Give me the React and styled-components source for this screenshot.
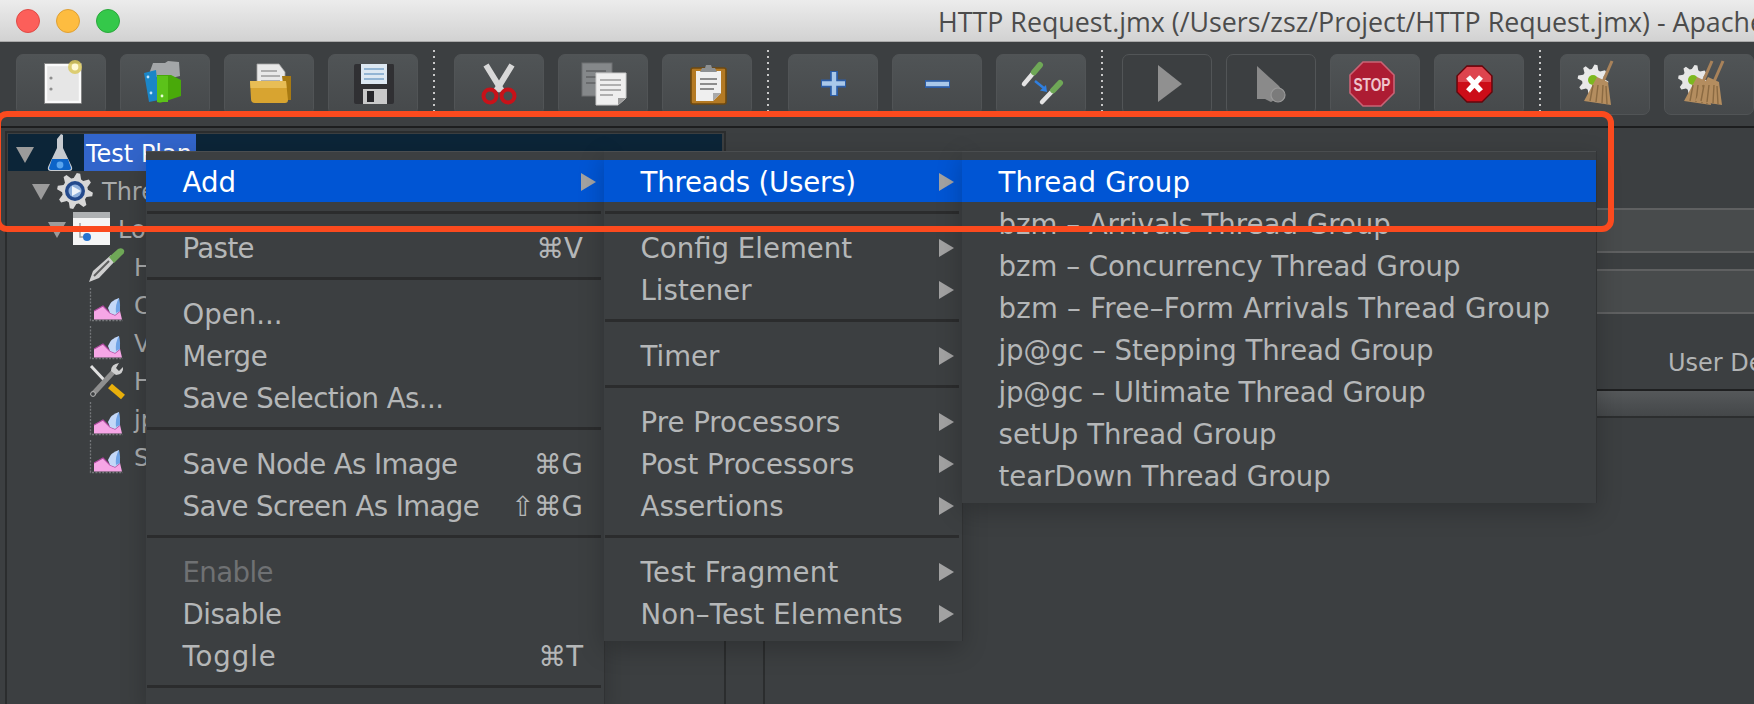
import React from "react";
import styled, { createGlobalStyle } from "styled-components";

const Global = createGlobalStyle`
  html, body { margin: 0; padding: 0; background: #3c3f41; }
  #root { width: 1754px; height: 704px; overflow: hidden; position: relative; }
`;

const FONT = `"DejaVu Sans", "Noto Sans", sans-serif`;

const Page = styled.div`
  width: 1754px; height: 704px; overflow: hidden; position: relative;
  display: flex; flex-direction: column; background: #3c3f41; font-family: ${FONT};
`;
const TitleBar = styled.header`
  flex: 0 0 42px; box-sizing: border-box; height: 42px; display: flex; align-items: center;
  padding-left: 28px; border-bottom: 1px solid #a9a9a9;
  background: linear-gradient(#ececec, #d2d2d2); overflow: hidden;
`;
const Lights = styled.div`display: flex; gap: 16px; width: 922px; margin-left: -12px; flex: none;`;
const Light = styled.span`
  width: 24px; height: 24px; border-radius: 50%; box-sizing: border-box;
  background: ${p => p.$c}; border: 1px solid ${p => p.$b};
`;
const Title = styled.div`
  font: 26.8px "Open Sans", "Noto Sans", sans-serif; color: #4c4c4c; white-space: nowrap; flex: none; padding-top: 1px;
`;
const Toolbar = styled.div`
  flex: 0 0 86px; box-sizing: border-box; height: 86px; display: flex; gap: 14px;
  padding: 12px 0 0 16px; border-bottom: 2px solid #1d1e1f; overflow: hidden;
`;
const ToolButton = styled.div`
  flex: none; box-sizing: border-box; width: 90px; height: 61px; border-radius: 7px; padding: 3px 0 0 14px;
  border: 1px solid ${p => p.$off ? "#525557" : "#515456"};
  background: ${p => p.$off ? "#3c3f41" : "linear-gradient(#505456, #46494b)"};
  svg { display: block; overflow: visible; }
`;
const ToolSep = styled.div`
  flex: none; width: 8px; height: 66px; margin-top: -4px;
  background-image: linear-gradient(#c8c8c8 34%, transparent 34%);
  background-size: 2px 6px; background-repeat: repeat-y; background-position: 1px 0;
`;
const Workspace = styled.main`flex: 1; display: flex; min-height: 0; padding-top: 3px;`;
const TreePane = styled.section`
  flex: none; box-sizing: border-box; width: 721px; margin-left: 5px; padding: 1px 2px 0 1px;
  border-left: 2px solid #2b2d2e; border-top: 2px solid #2b2d2e; border-right: 2px solid #2b2d2e;
`;
const TreeRow = styled.div`
  height: ${p => p.$h || 38}px; display: flex; align-items: center; box-sizing: border-box;
  padding-left: ${p => p.$level * 16 + 8}px; background: ${p => p.$selected ? "#0c2538" : "transparent"};
  font-size: 24px; color: #a9abac; white-space: nowrap;
`;
const Twist = styled.span`
  flex: none; width: 30px; display: flex; padding-top: 4px;
  &::before {
    content: ""; display: ${p => p.$leaf ? "none" : "block"}; width: 0; height: 0;
    border-left: 9px solid transparent; border-right: 9px solid transparent; border-top: 16px solid #9b9b9b;
  }
`;
const NodeIcon = styled.span`
  flex: none; width: 36px; height: 38px; margin: 0 9px 0 -5px; display: block;
  svg { display: block; overflow: visible; }
`;
const NodeLabel = styled.span`
  height: 37px; line-height: 41px; margin-left: -2px; padding: 0 4px 0 2px;
  background: ${p => p.$selected ? "#3265cb" : "transparent"};
  color: ${p => p.$selected ? "#fff" : "inherit"};
`;
const Splitter = styled.div`flex: none; width: 37px; margin-top: 30px; border-right: 2px solid #2b2d2e;`;
const Detail = styled.section`flex: 1; min-width: 0; padding-top: 77px; display: flex; flex-direction: column; overflow: hidden;`;
const Field = styled.div`
  flex: none; height: 41px; margin-bottom: 16px; border-top: 2px solid #5f6061; border-bottom: 2px solid #5f6061;
  background: #484b4c;
`;
const ColumnLabel = styled.div`
  flex: none; height: 52px; padding: 7px 0 0 903px; display: flex; align-items: center;
  font-size: 24px; color: #b2b4b5; white-space: nowrap;
`;
const TableHead = styled.div`
  flex: none; height: 25px; border-top: 2px solid #1f2021; border-bottom: 2px solid #2c2e2f;
  background: linear-gradient(#55585a, #444749);
`;
const Cascade = styled.div`position: absolute; left: 146px; top: 152px; display: flex; align-items: flex-start;`;
const Menu = styled.nav`
  flex: none; box-sizing: border-box; width: ${p => p.$w}px; padding: 8px 0 7px; background: #3c3f41;
  border-top: 1px solid #4a4d4f; margin-top: -1px; box-shadow: 0 8px 24px rgba(0,0,0,.22), 1px 0 0 #36383a;
  position: relative;
`;
const MenuRow = styled.div`
  height: 42px; box-sizing: border-box; display: flex; align-items: center; justify-content: space-between;
  padding: 2px ${p => p.$sub ? 8 : 21}px 0 36.5px; font-size: 27.6px; white-space: nowrap;
  color: ${p => p.$active ? "#fff" : p.$disabled ? "#6f7173" : "#b5b7b8"};
  background: ${p => p.$active ? "#0055d4" : "transparent"};
`;
const RowText = styled.span`letter-spacing: ${p => p.$track || 0}px;`;
const SubArrow = styled.i`
  flex: none; width: 0; height: 0; border-left: 15px solid #a2a2a2;
  border-top: 9px solid transparent; border-bottom: 9px solid transparent;
`;
const MenuSep = styled.div`height: 3px; margin: 9px 3px 12px 1px; background: #2b2c2d;`;
const Shortcut = styled.span`color: #b5b7b8; font-size: 27.6px;`;
const Callout = styled.div`
  position: absolute; left: -5px; top: 111px; width: 1619px; height: 121px; box-sizing: border-box;
  border: 6px solid #fb4a1e; border-radius: 12px; pointer-events: none;
`;

const gear = (cx, cy, r1, r2, n) => {
  const pts = [];
  for (let i = 0; i < n * 4; i++) {
    const a = (i + 0.5) / (n * 4) * Math.PI * 2;
    const r = i % 4 < 2 ? r2 : r1;
    pts.push(`${(cx + Math.cos(a) * r).toFixed(1)},${(cy + Math.sin(a) * r).toFixed(1)}`);
  }
  return pts.join(" ");
};

const Tool = ({ children }) => <svg width="60" height="52" viewBox="0 0 60 52">{children}</svg>;

const Pipette = ({ x1, y1, x2, y2, w = 6 }) => {
  const mx = x1 + (x2 - x1) * 0.62, my = y1 + (y2 - y1) * 0.62;
  return (
    <g strokeLinecap="round">
      <line x1={x1} y1={y1} x2={mx} y2={my} stroke="#e4e4e4" strokeWidth={w * 0.75} />
      <line x1={mx} y1={my} x2={x2} y2={y2} stroke="#6fa857" strokeWidth={w} />
    </g>
  );
};

const Broom = ({ dx = 0, dy = 0 }) => (
  <g transform={`translate(${dx} ${dy})`}>
    <line x1="37" y1="3" x2="27" y2="26" stroke="#a8825a" strokeWidth="3" />
    <polygon points="22,19 33,24 36,47 9,43" fill="#b48d5f" />
    <path d="M18 27 L15 43 M23 27 L21 44 M28 27 L27 45 M31 28 L32 46" stroke="#8b6a42" strokeWidth="1.4" fill="none" />
  </g>
);

const icons = {
  doc: (
    <Tool>
      <rect x="15" y="7" width="34" height="37" fill="#e6e6e6" stroke="#fafafa" strokeWidth="2.4" />
      <rect x="13.5" y="5.5" width="37" height="40" fill="none" stroke="#8a8a8a" strokeWidth=".8" />
      <circle cx="20" cy="20" r="1.6" fill="#8f8f8f" /><circle cx="20" cy="31" r="1.6" fill="#8f8f8f" />
      <circle cx="44" cy="9" r="7" fill="#d9c85e" opacity=".85" /><circle cx="44" cy="9" r="3.4" fill="#fff9d8" />
    </Tool>
  ),
  template: (
    <Tool>
      <path d="M14 16 L18 5 L30 5 L33 3 L44 4 L45 18 L28 22Z" fill="#a3a6a8" />
      <path d="M9 15 L21 12 L24 42 L14 44 Z" fill="#1a86c8" />
      <circle cx="13" cy="19" r="1.4" fill="#bfe4fa" /><circle cx="16" cy="35" r="1.4" fill="#bfe4fa" />
      <path d="M22 17 L36 17 L46 22 L46 38 L34 42 L25 45 L22 44 Z" fill="#49a90a" />
      <rect x="22" y="18" width="11" height="26" fill="#5cc21a" />
      <circle cx="27" cy="38" r="1.4" fill="#e7ffd6" />
    </Tool>
  ),
  open: (
    <Tool>
      <path d="M18 32 L18 6 L40 6 L46 14 L46 32Z" fill="#e8e8e8" stroke="#a5a5a5" strokeWidth=".8" />
      <path d="M22 13 H38 M22 18 H41 M22 23 H41" stroke="#9a9a9a" strokeWidth="1.6" />
      <path d="M43 18 L52 18 L52 42 L46 42Z" fill="#a87a12" />
      <path d="M11 23 L47 23 L49 42 Q49 45 46 45 L16 45 Q12 45 12 41Z" fill="#d8a430" />
      <path d="M11 23 L47 23 L47.6 30 L11.6 30Z" fill="#e8bd55" />
    </Tool>
  ),
  save: (
    <Tool>
      <path d="M11 8 Q11 6 13 6 L50 6 Q51 6 51 8 L51 44 Q51 46 49 46 L13 46 Q11 46 11 44Z" fill="#303033" />
      <rect x="18" y="6" width="26" height="20" fill="#dde8f2" />
      <path d="M21 11 H41 M21 16 H41 M21 21 H41" stroke="#93b5d4" strokeWidth="1.8" />
      <rect x="20" y="31" width="24" height="15" fill="#c9c9c9" />
      <rect x="24" y="33" width="7" height="11" fill="#26262a" />
    </Tool>
  ),
  cut: (
    <Tool>
      <path d="M17 7 L33 33 M43 7 L27 33" stroke="#d8d8d8" strokeWidth="6" />
      <circle cx="21" cy="38" r="6.5" fill="none" stroke="#c81219" strokeWidth="4" />
      <circle cx="39" cy="38" r="6.5" fill="none" stroke="#c81219" strokeWidth="4" />
    </Tool>
  ),
  copy: (
    <Tool>
      <rect x="9" y="5" width="30" height="33" fill="#85888a" stroke="#6f7173" />
      <path d="M13 13 H33 M13 19 H33 M13 25 H30" stroke="#696b6d" strokeWidth="1.8" />
      <path d="M23 15 L53 15 L53 40 L45 47 L23 47Z" fill="#efefef" stroke="#c9c9c9" />
      <path d="M27 22 H48 M27 27 H48 M27 32 H48 M27 37 H40" stroke="#9c9c9c" strokeWidth="1.6" />
      <path d="M45 47 L45 40 L53 40Z" fill="#9a9a9a" />
    </Tool>
  ),
  paste: (
    <Tool>
      <rect x="14" y="10" width="35" height="36" rx="2" fill="#b47a24" stroke="#6f4a10" strokeWidth="1.6" />
      <path d="M19 13 L44 13 L44 35 L36 43 L19 43Z" fill="#efefef" />
      <path d="M23 21 H40 M23 26 H40 M23 31 H37" stroke="#8d8d8d" strokeWidth="1.8" />
      <path d="M36 43 L36 35 L44 35Z" fill="#a9a9a9" />
      <path d="M23 14 L25 10 L28 10 L29 7 L34 7 L35 10 L38 10 L40 14Z" fill="#8d9092" />
    </Tool>
  ),
  plus: (
    <Tool>
      <path d="M31 13 V38 M18 25.5 H43" stroke="#2c5da6" strokeWidth="8" />
      <path d="M31 14 V37 M19 25.5 H42" stroke="#a9c8ea" strokeWidth="4.4" />
    </Tool>
  ),
  minus: (
    <Tool>
      <path d="M18 26 H43" stroke="#2c5da6" strokeWidth="8" />
      <path d="M19 26 H42" stroke="#a9c8ea" strokeWidth="4.4" />
    </Tool>
  ),
  toggle: (
    <Tool>
      <Pipette x1={13} y1={26} x2={29} y2={7} />
      <Pipette x1={31} y1={44} x2={49} y2={25} />
      <path d="M24 23 L34 31" stroke="#2f7fe0" strokeWidth="2.4" />
      <path d="M36 34 L29 32.5 L35 27Z" fill="#2f7fe0" />
    </Tool>
  ),
  play: <Tool><polygon points="21,7 45,26 21,44" fill="#909090" /></Tool>,
  playNo: (
    <Tool>
      <path d="M16 8 L38 28 Q42 32 40 38 L30 44 L24 41 L16 41Z" fill="#8a8a8a" />
      <circle cx="37" cy="37" r="7" fill="#7b7b7b" stroke="#9a9a9a" strokeWidth="1.2" />
    </Tool>
  ),
  stop: (
    <Tool>
      <polygon points="18,4 36,4 49,17 49,35 36,48 18,48 5,35 5,17" fill="#ad1c33" stroke="#c96476" strokeWidth="1.6" />
      <text x="27" y="33" textAnchor="middle" fontFamily="'Liberation Sans', sans-serif" fontWeight="700" fontSize="19" textLength="37" lengthAdjust="spacingAndGlyphs" fill="#efc3cb">STOP</text>
    </Tool>
  ),
  error: (
    <Tool>
      <polygon points="18,8 33,8 43,18 43,34 33,44 18,44 8,34 8,18" fill="#cc0d18" stroke="#62060c" strokeWidth="1.4" />
      <path d="M18 9 L33 9 L42 18 L42 24 L9 24 L9 18Z" fill="#e6636b" opacity=".65" />
      <path d="M19 19 L32 33 M32 19 L19 33" stroke="#fff" strokeWidth="5.4" />
    </Tool>
  ),
  clear: (
    <Tool>
      <polygon points={gear(18, 22, 11, 15.5, 8)} fill="#e9e9e9" />
      <circle cx="18" cy="22" r="5" fill="#7db81f" />
      <Broom />
    </Tool>
  ),
  clearAll: (
    <Tool>
      <polygon points={gear(14, 22, 11, 15, 8)} fill="#e6e6e6" />
      <circle cx="14" cy="22" r="5" fill="#7db81f" />
      <Broom dx={-4} />
      <Broom dx={7} />
    </Tool>
  ),
};

const Node = ({ children }) => <svg width="36" height="38" viewBox="0 0 36 38">{children}</svg>;

const nodeIcons = {
  flask: (
    <Node>
      <path d="M20 0 L22 1 L22 14 L31 33 Q32 37 28 37 L10 37 Q6 37 7 33 L16 14 L16 5 Z" fill="#c7cbd0" />
      <path d="M11 25 L27 25 L30 34 Q30 36 27 36 L11 36 Q8 36 8 34Z" fill="#0d64c8" />
      <circle cx="19" cy="31" r="3.4" fill="#58a4ee" />
    </Node>
  ),
  gear: (
    <Node>
      <polygon points={gear(18, 20, 13, 18, 8)} fill="#d7d7d7" />
      <circle cx="18" cy="20" r="10" fill="#23498c" />
      <circle cx="18" cy="20" r="6.5" fill="#8fb0dc" />
      <polygon points="15,15 24,20 15,25" fill="#eef3fa" />
    </Node>
  ),
  doc: (
    <Node>
      <rect x="0" y="3" width="37" height="33" fill="#f5f5f5" />
      <rect x="0" y="3" width="37" height="6" fill="#aeb1b3" />
      <path d="M7 14 V28 H16" stroke="#9b9b9b" fill="none" strokeWidth="1.4" />
      <rect x="11" y="17" width="5" height="5" fill="#8fb7e8" />
      <circle cx="14" cy="28" r="4" fill="#2674d0" />
    </Node>
  ),
  pipette: (
    <Node>
      <path d="M0 35 L4 24 L22 8 L27 13 L10 31Z" fill="#cfcfcf" />
      <path d="M5 29 L20 14" stroke="#5e5e5e" strokeWidth="2" />
      <path d="M20 10 L29 2 Q33 0 35 3 Q36 6 33 8 L25 16Z" fill="#6fa857" />
    </Node>
  ),
  chart: (
    <Node>
      <path d="M1.5 3 V35.5 H34" stroke="#74777a" strokeWidth="1.3" fill="none" strokeDasharray="2 1.4" />
      <path d="M5 34.5 L5 26 L14 21 L21 28 L26 30 L31 26 L33 34.5Z" fill="#f6a6e6" />
      <path d="M5 26 L14 21 L21 28 L26 30 L31 26" stroke="#b04aa0" strokeWidth="1.2" fill="none" />
      <path d="M30 13 Q22 15 19 23 L21 28 L26 30 L31 26Z" fill="#c4d8f8" />
      <path d="M30 13 Q31.5 20 31 26 L27 28 Q26 19 30 13Z" fill="#6fa3e6" />
    </Node>
  ),
  wrench: (
    <Node>
      <path d="M2 5 L16 20" stroke="#e0e0e0" strokeWidth="3" />
      <path d="M16 20 L22 26" stroke="#3a3a3a" strokeWidth="2.5" />
      <path d="M21 25 L34 36" stroke="#e9b00c" strokeWidth="6" />
      <path d="M27 8 L4 33" stroke="#8e8e8e" strokeWidth="5" />
      <circle cx="4" cy="33" r="2.4" fill="#3c3f41" stroke="#bbb" strokeWidth="1" />
      <path d="M22 10 Q22 3 30 2 L27 7 L30 10 L34 6 Q35 13 27 14Z" fill="#cfcfcf" />
    </Node>
  ),
};

const toolbar = [
  "doc", "template", "open", "save", "|", "cut", "copy", "paste", "|",
  "plus", "minus", "toggle", "|", "play", "playNo", "stop", "error", "|", "clear", "clearAll",
];

const tree = [
  { level: 0, icon: "gear", label: "Thread Group" },
  { level: 1, icon: "doc", label: "Loop", open: true },
  { level: 2, icon: "pipette", label: "HTTP Request", leaf: true },
  { level: 2, icon: "chart", label: "Cookie", leaf: true },
  { level: 2, icon: "chart", label: "View", leaf: true },
  { level: 2, icon: "wrench", label: "HTTP Header", leaf: true },
  { level: 2, icon: "chart", label: "jp@gc", leaf: true },
  { level: 2, icon: "chart", label: "Summary", leaf: true },
];

const menuOne = [
  [{ t: "Add", sub: true, active: true }],
  [{ t: "Paste", k: "⌘V", track: -0.6 }],
  [{ t: "Open..." }, { t: "Merge", track: -0.2 }, { t: "Save Selection As...", track: -0.55 }],
  [{ t: "Save Node As Image", k: "⌘G", track: -0.6 }, { t: "Save Screen As Image", k: "⇧⌘G", track: -0.6 }],
  [{ t: "Enable", disabled: true, track: -0.6 }, { t: "Disable", track: -0.5 }, { t: "Toggle", k: "⌘T", track: 0.9 }],
  [],
];
const menuTwo = [
  [{ t: "Threads (Users)", sub: true, active: true, track: -0.2 }],
  [{ t: "Config Element", sub: true }, { t: "Listener", sub: true }],
  [{ t: "Timer", sub: true }],
  [{ t: "Pre Processors", sub: true }, { t: "Post Processors", sub: true }, { t: "Assertions", sub: true }],
  [{ t: "Test Fragment", sub: true, track: 0.25 }, { t: "Non–Test Elements", sub: true, track: 0.1 }],
];
const menuThree = [
  [
    { t: "Thread Group", active: true, track: 0.2 },
    { t: "bzm – Arrivals Thread Group" },
    { t: "bzm – Concurrency Thread Group" },
    { t: "bzm – Free–Form Arrivals Thread Group", track: 0.24 },
    { t: "jp@gc – Stepping Thread Group", track: -0.1 },
    { t: "jp@gc – Ultimate Thread Group", track: -0.2 },
    { t: "setUp Thread Group" },
    { t: "tearDown Thread Group" },
  ],
];

const MenuPanel = ({ width, groups }) => (
  <Menu $w={width}>
    {groups.map((rows, g) => (
      <React.Fragment key={g}>
        {g > 0 && <MenuSep />}
        {rows.map(r => (
          <MenuRow key={r.t} $active={r.active} $disabled={r.disabled} $sub={r.sub}>
            <RowText $track={r.track}>{r.t}</RowText>
            {r.sub && <SubArrow />}
            {r.k && <Shortcut>{r.k}</Shortcut>}
          </MenuRow>
        ))}
      </React.Fragment>
    ))}
  </Menu>
);

export default function App() {
  return (
    <Page>
      <Global />
      <TitleBar>
        <Lights>
          <Light $c="#fc5f5a" $b="#e04a45" />
          <Light $c="#fdbc40" $b="#dfa034" />
          <Light $c="#34c84a" $b="#2aa83c" />
        </Lights>
        <Title>HTTP Request.jmx (/Users/zsz/Project/HTTP Request.jmx) - Apache JMeter</Title>
      </TitleBar>
      <Toolbar>
        {toolbar.map((n, i) =>
          n === "|" ? <ToolSep key={i} /> : (
            <ToolButton key={i} $off={n === "play" || n === "playNo"}>{icons[n]}</ToolButton>
          )
        )}
      </Toolbar>
      <Workspace>
        <TreePane>
          <TreeRow $level={0} $selected $h={37}>
            <Twist />
            <NodeIcon>{nodeIcons.flask}</NodeIcon>
            <NodeLabel $selected>Test Plan</NodeLabel>
          </TreeRow>
          {tree.map((n, i) => (
            <TreeRow key={i} $level={n.level + 1}>
              <Twist $leaf={n.leaf} />
              <NodeIcon>{nodeIcons[n.icon]}</NodeIcon>
              <NodeLabel>{n.label}</NodeLabel>
            </TreeRow>
          ))}
        </TreePane>
        <Splitter />
        <Detail>
          <Field />
          <Field />
          <ColumnLabel>User Defined Variables</ColumnLabel>
          <TableHead />
        </Detail>
      </Workspace>
      <Cascade>
        <MenuPanel width={458} groups={menuOne} />
        <MenuPanel width={358} groups={menuTwo} />
        <MenuPanel width={634} groups={menuThree} />
      </Cascade>
      <Callout />
    </Page>
  );
}
